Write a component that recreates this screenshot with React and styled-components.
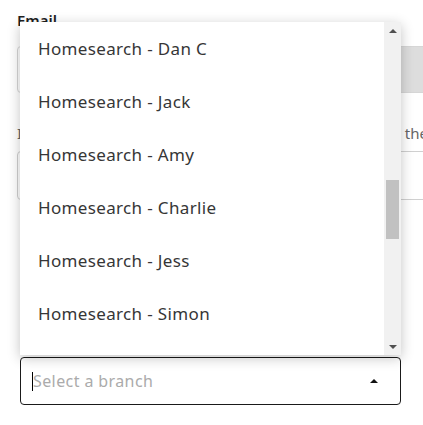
import { useLayoutEffect, useRef } from "react";
import styled, { createGlobalStyle } from "styled-components";

const GlobalStyle = createGlobalStyle`
  html, body {
    margin: 0;
    padding: 0;
    background: #ffffff;
    overflow: hidden;
  }
  body {
    font-family: "Noto Sans", "Open Sans", sans-serif;
    color: #222;
  }
`;

const Page = styled.div`
  width: 423px;
  height: 425px;
  overflow: hidden;
  display: flex;
  flex-direction: column;
`;

const Form = styled.div`
  padding-left: 17px;
  display: flex;
  flex-direction: column;
`;

const Label = styled.div`
  font-size: 15px;
  font-weight: 600;
  line-height: 18px;
  margin-top: 11px;
  color: #1f1f1f;
`;

const InputRow = styled.div`
  margin-top: 17px;
  width: 440px;
  height: 47px;
  box-sizing: border-box;
  border: 1px solid #d6d6d6;
  border-radius: 4px;
  display: flex;
`;

const InputText = styled.div`
  flex: 1;
`;

const InputAddon = styled.div`
  width: 60px;
  background: #dddddd;
`;

const Hint = styled.div`
  margin-top: 32px;
  width: 411px;
  font-size: 15px;
  line-height: 16px;
  color: #666;
  white-space: nowrap;
  display: flex;
  justify-content: space-between;
`;

const SecondInput = styled.div`
  margin-top: 10px;
  width: 440px;
  height: 49px;
  box-sizing: border-box;
  border: 1px solid #d0d0d0;
  border-radius: 4px;
`;

const SelectWrap = styled.div`
  position: relative;
  margin: auto 0 20px 20px;
  width: 381px;
`;

const SelectBox = styled.div`
  height: 48px;
  box-sizing: border-box;
  border: 1px solid #1a1a1a;
  border-radius: 4px;
  display: flex;
  align-items: center;
  padding: 0 22px 0 11px;
`;

const Caret = styled.span`
  width: 1px;
  height: 19px;
  background: #000;
`;

const Placeholder = styled.span`
  flex: 1;
  font-size: 16px;
  letter-spacing: 0.4px;
  color: #ababab;
`;

const Arrow = styled.span`
  width: 0;
  height: 0;
  border-left: 4px solid transparent;
  border-right: 4px solid transparent;
  border-${(p) => (p.$down ? "top" : "bottom")}: 4px solid ${(p) => p.$color || "#111"};
`;

const Menu = styled.div`
  position: absolute;
  left: 0;
  right: 0;
  bottom: calc(100% + 2px);
  height: 333px;
  background: #fff;
  display: flex;
  box-shadow: 0 3px 12px rgba(0, 0, 0, 0.24);
`;

const List = styled.div`
  flex: 1;
  overflow: hidden;
`;

const Option = styled.div`
  height: 53px;
  display: flex;
  align-items: center;
  padding-left: 18px;
  font-size: 17px;
  letter-spacing: 0.35px;
  color: #363636;
  white-space: nowrap;
`;

const ScrollBar = styled.div`
  width: 17px;
  background: #f1f1f1;
  display: flex;
  flex-direction: column;
`;

const ScrollButton = styled.div`
  height: 17px;
  display: flex;
  align-items: center;
  justify-content: center;
`;

const Track = styled.div`
  flex: 1;
  display: flex;
  flex-direction: column;
  align-items: center;
`;

const Thumb = styled.div`
  width: 13px;
  background: #c1c1c1;
`;

const branches = [
  "Abbey Road", "Ashford", "Barnet", "Bedford", "Brighton", "Bristol",
  "Cambridge", "Canterbury", "Chelmsford", "Croydon", "Derby", "Exeter",
  "Guildford", "Harrow", "Homesearch - Anna", "Homesearch - Dan C",
  "Homesearch - Jack", "Homesearch - Amy", "Homesearch - Charlie",
  "Homesearch - Jess", "Homesearch - Simon", "Homesearch - Tom",
  "Ipswich", "Kingston", "Leeds", "Leicester", "Luton", "Norwich",
  "Oxford", "Reading", "Watford", "York",
];

const ROW = 53;
const VIEW = 333;
const TRACK = VIEW - 34;
const SCROLL = 15 * ROW + 7;

export default function App() {
  const listRef = useRef(null);
  const total = branches.length * ROW;
  const thumbHeight = Math.round((VIEW / total) * TRACK);
  const thumbTop = Math.round((SCROLL / total) * TRACK);

  useLayoutEffect(() => {
    if (listRef.current) listRef.current.scrollTop = 15 * ROW;
  }, []);

  return (
    <Page>
      <GlobalStyle />
      <Form>
        <Label>Email</Label>
        <InputRow>
          <InputText />
          <InputAddon />
        </InputRow>
        <Hint>
          <span>I</span>
          <span>the</span>
        </Hint>
        <SecondInput />
      </Form>
      <SelectWrap>
        <Menu>
          <List ref={listRef}>
            {branches.map((b) => (
              <Option key={b}>{b}</Option>
            ))}
          </List>
          <ScrollBar>
            <ScrollButton>
              <Arrow $color="#505050" />
            </ScrollButton>
            <Track>
              <Thumb style={{ marginTop: thumbTop, height: thumbHeight }} />
            </Track>
            <ScrollButton>
              <Arrow $down $color="#505050" />
            </ScrollButton>
          </ScrollBar>
        </Menu>
        <SelectBox>
          <Caret />
          <Placeholder>Select a branch</Placeholder>
          <Arrow />
        </SelectBox>
      </SelectWrap>
    </Page>
  );
}
